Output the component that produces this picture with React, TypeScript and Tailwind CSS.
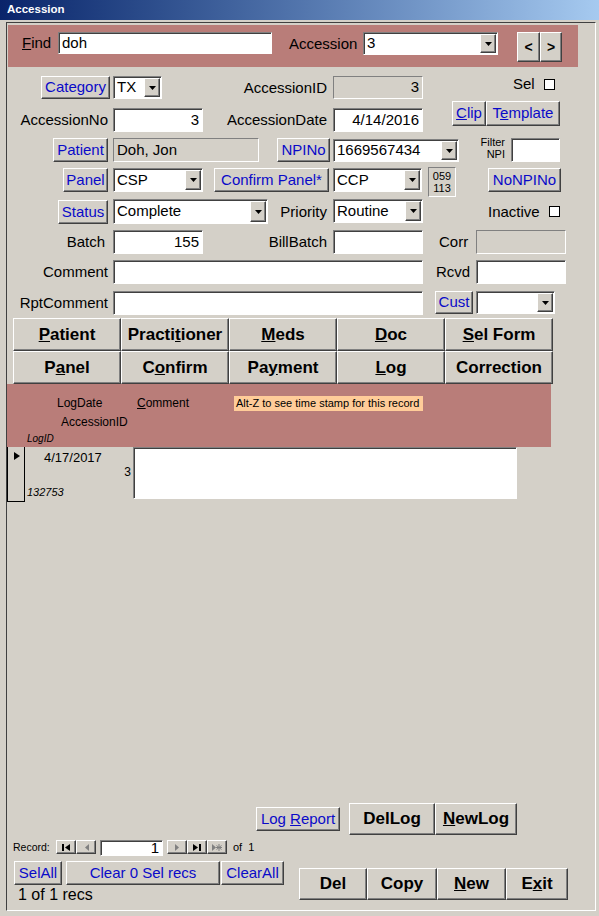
import React from "react";

const raised =
  "border border-t-white border-l-white border-r-[#404040] border-b-[#404040] bg-[#d4d0c8] shadow-[inset_-1px_-1px_0_#808080]";
const sunken = "border border-t-[#808080] border-l-[#808080] border-r-white border-b-white";

type Props = { className?: string; children?: React.ReactNode };

function Btn({ className = "", children }: Props) {
  return (
    <div className={`flex shrink-0 items-center justify-center whitespace-pre ${raised} ${className}`}>
      <span>{children}</span>
    </div>
  );
}

// blue "hyperlink" buttons
function LinkBtn({ className = "", children }: Props) {
  return <Btn className={`text-[15px] text-[#0a0ac8] ${className}`}>{children}</Btn>;
}

// bold command buttons
function BigBtn({ className = "", children }: Props) {
  return <Btn className={`text-[17px] font-bold ${className}`}>{children}</Btn>;
}

function Field({
  className = "",
  value = "",
  right = false,
  disabled = false,
}: {
  className?: string;
  value?: string;
  right?: boolean;
  disabled?: boolean;
}) {
  return (
    <div
      className={`flex shrink-0 items-center overflow-hidden whitespace-nowrap px-[3px] text-[15px] ${sunken} ${
        disabled ? "bg-[#d4d0c8]" : "bg-white shadow-[inset_1px_1px_0_#404040]"
      } ${right ? "justify-end" : "justify-start"} ${className}`}
    >
      {value}
    </div>
  );
}

function Combo({ className = "", value = "" }: { className?: string; value?: string }) {
  return (
    <div className={`flex shrink-0 items-stretch overflow-hidden bg-white ${sunken} shadow-[inset_1px_1px_0_#404040] ${className}`}>
      <span className="flex flex-1 items-center whitespace-nowrap pl-[3px] text-[15px]">{value}</span>
      <span className={`my-[1px] mr-[1px] flex w-[16px] items-center justify-center ${raised}`}>
        <svg width="7" height="4" viewBox="0 0 7 4">
          <path d="M0 0h7L3.5 4z" fill="#000" />
        </svg>
      </span>
    </div>
  );
}

function Lbl({ className = "", children }: Props) {
  return <div className={`shrink-0 whitespace-nowrap text-[15px] ${className}`}>{children}</div>;
}

function Check({ className = "" }: { className?: string }) {
  return <div className={`h-[11px] w-[11px] shrink-0 border border-black bg-white ${className}`} />;
}

function NavBtn({ children }: Props) {
  return <Btn className="h-[14px] w-[20px]">{children}</Btn>;
}

export default function App() {
  return (
    <div className="h-[916px] w-[599px] overflow-hidden bg-[#d4d0c8] font-['Liberation_Sans',Arial,sans-serif] text-black">
      {/* Title bar */}
      <div className="flex h-[20px] items-center bg-linear-to-r from-[#0a246a] to-[#a6caf0] pl-[7px] text-[11.5px] font-bold text-white">
        Accession
      </div>

      {/* Client area */}
      <div className="ml-[6px] mt-[2px] h-[889px] w-[590px] border border-t-[#404040] border-l-[#404040] border-r-white border-b-white">
        {/* Header */}
        <div className="h-[53px] pt-[2px]">
          <div className="ml-[1px] flex h-[42px] w-[570px] items-start bg-[#b97d79]">
            <Lbl className="ml-[14px] mt-[7px] w-[36px] leading-[22px]">
              <u>F</u>ind
            </Lbl>
            <Field className="mt-[7px] h-[22px] w-[214px]" value="doh" />
            <Lbl className="ml-[17px] mt-[7px] w-[74px] leading-[23px]">Accession</Lbl>
            <Combo className="mt-[7px] h-[23px] w-[135px]" value="3" />
            <div className="ml-[19px] mt-[7px] flex">
              <Btn className="h-[30px] w-[23px] text-[14px] font-bold">&lt;</Btn>
              <Btn className="h-[30px] w-[22px] text-[14px] font-bold">&gt;</Btn>
            </div>
          </div>
        </div>

        {/* Row 1 */}
        <div className="flex h-[25px] items-start">
          <LinkBtn className="ml-[34px] h-[23px] w-[69px]">Category</LinkBtn>
          <Combo className="ml-[3px] h-[23px] w-[49px]" value="TX" />
          <Lbl className="w-[168px] pr-[3px] text-right leading-[23px]">AccessionID</Lbl>
          <Field className="ml-[3px] h-[23px] w-[90px]" value="3" right disabled />
          <Lbl className="ml-[90px] w-[31px] leading-[16px]">Sel</Lbl>
          <Check className="mt-[3px]" />
        </div>

        {/* Row 2 */}
        <div className="flex h-[34px] items-start">
          <Lbl className="mt-[7px] w-[103px] pr-[2px] text-right leading-[24px]">AccessionNo</Lbl>
          <Field className="ml-[3px] mt-[7px] h-[24px] w-[90px]" value="3" right />
          <Lbl className="mt-[7px] w-[127px] pr-[3px] text-right leading-[24px]">AccessionDate</Lbl>
          <Field className="ml-[3px] mt-[7px] h-[24px] w-[90px]" value="4/14/2016" right />
          <LinkBtn className="ml-[29px] h-[25px] w-[34px]">
            <u>C</u>lip
          </LinkBtn>
          <LinkBtn className="h-[25px] w-[74px]">
            T<u>e</u>mplate
          </LinkBtn>
        </div>

        {/* Row 3 */}
        <div className="flex h-[32px] items-start">
          <LinkBtn className="ml-[46px] mt-[3px] h-[24px] w-[55px]">Patient</LinkBtn>
          <Field className="ml-[5px] mt-[3px] h-[24px] w-[146px]" value="Doh, Jon" disabled />
          <LinkBtn className="ml-[18px] mt-[3px] h-[24px] w-[53px]">NPINo</LinkBtn>
          <Combo className="ml-[3px] mt-[4px] h-[23px] w-[126px]" value="1669567434" />
          <div className="ml-[19px] mt-[1px] w-[27px] text-right text-[11px] leading-[12px]">
            <div>Filter</div>
            <div>NPI</div>
          </div>
          <Field className="ml-[6px] mt-[3px] h-[24px] w-[49px]" />
        </div>

        {/* Row 4 */}
        <div className="flex h-[32px] items-start">
          <LinkBtn className="ml-[56px] mt-[1px] h-[24px] w-[45px]">Panel</LinkBtn>
          <Combo className="ml-[5px] mt-[1px] h-[24px] w-[90px]" value="CSP" />
          <LinkBtn className="ml-[11px] mt-[1px] h-[24px] w-[115px]">Confirm Panel*</LinkBtn>
          <Combo className="ml-[4px] mt-[1px] h-[24px] w-[89px]" value="CCP" />
          <div className={`ml-[6px] flex h-[30px] w-[28px] flex-col items-center justify-center text-[11px] leading-[12px] ${sunken}`}>
            <div>059</div>
            <div>113</div>
          </div>
          <LinkBtn className="ml-[32px] mt-[1px] h-[24px] w-[73px]">NoNPINo</LinkBtn>
        </div>

        {/* Row 5 */}
        <div className="flex h-[31px] items-start">
          <LinkBtn className="ml-[51px] mt-[1px] h-[24px] w-[50px]">Status</LinkBtn>
          <Combo className="ml-[5px] h-[25px] w-[155px]" value="Complete" />
          <Lbl className="w-[62px] pr-[3px] text-right leading-[25px]">Priority</Lbl>
          <Combo className="ml-[3px] h-[24px] w-[90px]" value="Routine" />
          <Lbl className="ml-[65px] w-[61px] leading-[25px]">Inactive</Lbl>
          <Check className="mt-[7px]" />
        </div>

        {/* Row 6 */}
        <div className="flex h-[30px] items-start">
          <Lbl className="w-[103px] pr-[5px] text-right leading-[24px]">Batch</Lbl>
          <Field className="ml-[3px] h-[24px] w-[90px]" value="155" right />
          <Lbl className="w-[127px] pr-[3px] text-right leading-[24px]">BillBatch</Lbl>
          <Field className="ml-[3px] h-[24px] w-[90px]" />
          <Lbl className="ml-[16px] w-[37px] leading-[24px]">Corr</Lbl>
          <Field className="h-[24px] w-[90px]" disabled />
        </div>

        {/* Row 7 */}
        <div className="flex h-[30px] items-start">
          <Lbl className="w-[103px] pr-[2px] text-right leading-[24px]">Comment</Lbl>
          <Field className="ml-[3px] h-[24px] w-[310px]" />
          <Lbl className="ml-[13px] w-[40px] leading-[24px]">Rcvd</Lbl>
          <Field className="h-[24px] w-[90px]" />
        </div>

        {/* Row 8 */}
        <div className="flex h-[28px] items-start">
          <Lbl className="mt-[1px] w-[103px] pr-[2px] text-right leading-[24px]">RptComment</Lbl>
          <Field className="ml-[3px] mt-[1px] h-[24px] w-[310px]" />
          <LinkBtn className="ml-[12px] mt-[1px] h-[23px] w-[38px]">Cust</LinkBtn>
          <Combo className="ml-[3px] mt-[1px] h-[23px] w-[79px]" />
        </div>

        {/* Sub-form buttons */}
        <div className="ml-[6px] flex h-[66px] flex-col">
          <div className="flex">
            <BigBtn className="h-[33px] w-[108px]">
              <u>P</u>atient
            </BigBtn>
            <BigBtn className="h-[33px] w-[108px]">
              Practi<u>t</u>ioner
            </BigBtn>
            <BigBtn className="h-[33px] w-[108px]">
              <u>M</u>eds
            </BigBtn>
            <BigBtn className="h-[33px] w-[108px]">
              <u>D</u>oc
            </BigBtn>
            <BigBtn className="h-[33px] w-[108px]">
              <u>S</u>el Form
            </BigBtn>
          </div>
          <div className="flex">
            <BigBtn className="h-[33px] w-[108px]">
              P<u>a</u>nel
            </BigBtn>
            <BigBtn className="h-[33px] w-[108px]">
              C<u>o</u>nfirm
            </BigBtn>
            <BigBtn className="h-[33px] w-[108px]">
              Pa<u>y</u>ment
            </BigBtn>
            <BigBtn className="h-[33px] w-[108px]">
              <u>L</u>og
            </BigBtn>
            <BigBtn className="h-[33px] w-[108px]">Correction</BigBtn>
          </div>
        </div>

        {/* Log header */}
        <div className="h-[63px] w-[544px] bg-[#b97d79] text-[12px]">
          <div className="flex pt-[12px] leading-[15px]">
            <span className="ml-[50px] w-[80px]">LogDate</span>
            <span className="w-[97px]">
              <u>C</u>omment
            </span>
            <span className="w-[189px] bg-[#ffcc99] px-[2px] text-[11px]">Alt-Z to see time stamp for this record</span>
          </div>
          <div className="ml-[54px] mt-[4px] leading-[15px]">AccessionID</div>
          <div className="ml-[20px] mt-[3px] text-[10px] italic leading-[12px]">LogID</div>
        </div>

        {/* Log detail */}
        <div className="flex h-[56px] items-start">
          <div className="h-[55px] w-[18px] border-x border-b border-black pl-[6px] pt-[5px]">
            <svg width="6" height="8" viewBox="0 0 6 8">
              <path d="M0 0v8l6-4z" fill="#000" />
            </svg>
          </div>
          <div className="w-[108px]">
            <div className="mt-[3px] pl-[19px] text-[13px] leading-[15px]">4/17/2017</div>
            <div className="pr-[2px] text-right text-[12px] leading-[15px]">3</div>
            <div className="mt-[6px] pl-[2px] text-[11px] italic leading-[12px]">132753</div>
          </div>
          <div className={`h-[52px] w-[384px] bg-white ${sunken} shadow-[inset_1px_1px_0_#404040]`} />
        </div>

        <div className="h-[300px]" />

        {/* Log buttons */}
        <div className="flex h-[37px] items-start">
          <LinkBtn className="ml-[249px] mt-[4px] h-[24px] w-[84px]">
            Log <u>R</u>eport
          </LinkBtn>
          <BigBtn className="ml-[9px] h-[32px] w-[86px]">DelLog</BigBtn>
          <BigBtn className="h-[32px] w-[82px]">
            <u>N</u>ewLog
          </BigBtn>
        </div>

        {/* Footer */}
        <div className="flex h-[70px] items-start">
          <div className="w-[283px]">
            <div className="flex h-[21px] items-start">
              <span className="ml-[6px] w-[43px] text-[10.5px] leading-[15px]">Record:</span>
              <NavBtn>
                <svg width="8" height="7" viewBox="0 0 8 7">
                  <rect x="0" y="0" width="2" height="7" fill="#000" />
                  <path d="M8 0v7L3 3.5z" fill="#000" />
                </svg>
              </NavBtn>
              <NavBtn>
                <svg width="5" height="7" viewBox="0 0 5 7">
                  <path d="M5 0v7L1 3.5z" fill="#808080" />
                </svg>
              </NavBtn>
              <Field className="ml-[4px] h-[16px] w-[63px] text-[12px]" value="1" right />
              <div className="ml-[4px] flex">
                <NavBtn>
                  <svg width="5" height="7" viewBox="0 0 5 7">
                    <path d="M0 0v7l4-3.5z" fill="#808080" />
                  </svg>
                </NavBtn>
                <NavBtn>
                  <svg width="8" height="7" viewBox="0 0 8 7">
                    <path d="M0 0v7l5-3.5z" fill="#000" />
                    <rect x="6" y="0" width="2" height="7" fill="#000" />
                  </svg>
                </NavBtn>
                <NavBtn>
                  <svg width="10" height="7" viewBox="0 0 10 7">
                    <path d="M0 0v7l4-3.5z" fill="#808080" />
                    <path d="M7 0v7M4.5 1.5l5 4M9.5 1.5l-5 4M4 3.5h6" stroke="#808080" strokeWidth="1" />
                  </svg>
                </NavBtn>
              </div>
              <span className="ml-[6px] text-[11px] leading-[15px]">of&nbsp;&nbsp;1</span>
            </div>
            <div className="flex h-[24px] items-start">
              <LinkBtn className="ml-[7px] h-[24px] w-[48px]">SelAll</LinkBtn>
              <LinkBtn className="ml-[4px] h-[24px] w-[154px]">Clear 0 Sel recs</LinkBtn>
              <LinkBtn className="ml-[1px] h-[24px] w-[63px]">ClearAll</LinkBtn>
            </div>
            <div className="ml-[11px] mt-[1px] text-[16px] leading-[18px]">1 of 1 recs</div>
          </div>
          <div className="ml-[9px] mt-[28px] flex">
            <BigBtn className="h-[32px] w-[68px]">Del</BigBtn>
            <BigBtn className="h-[32px] w-[70px]">Copy</BigBtn>
            <BigBtn className="h-[32px] w-[69px]">
              <u>N</u>ew
            </BigBtn>
            <BigBtn className="h-[32px] w-[62px]">
              E<u>x</u>it
            </BigBtn>
          </div>
        </div>
      </div>
    </div>
  );
}
